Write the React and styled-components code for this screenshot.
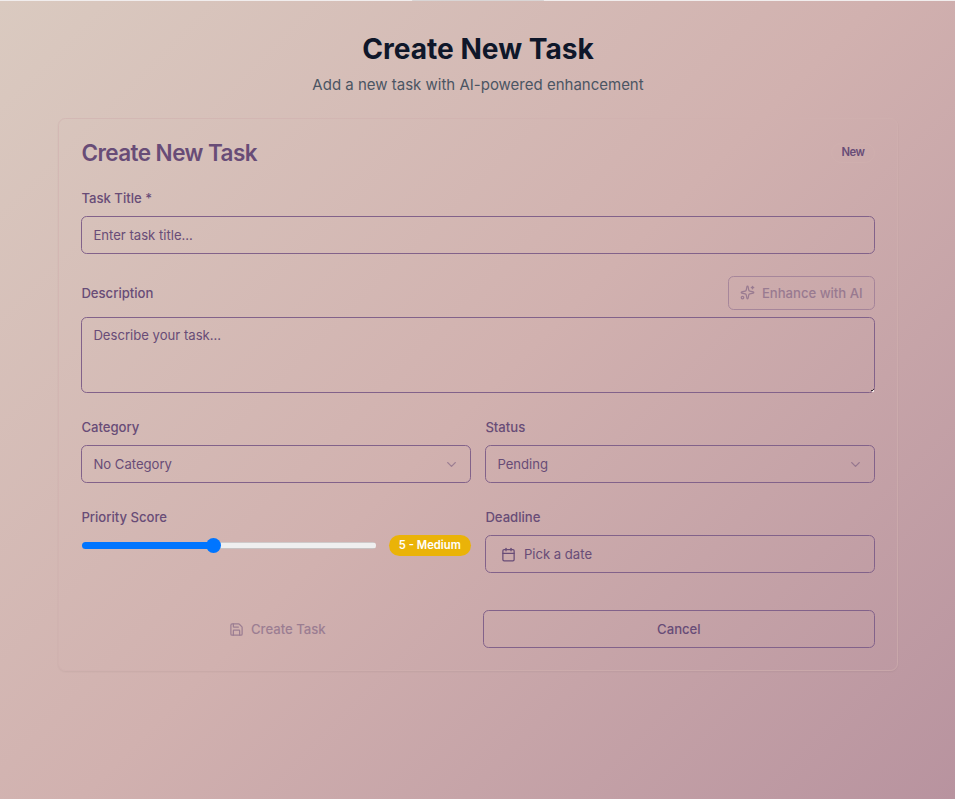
import React, { useState } from "react";
import styled, { createGlobalStyle, css } from "styled-components";
import { Sparkles, ChevronDown, Calendar, Save } from "lucide-react";

const ink = "#684c77";

const GlobalStyle = createGlobalStyle`
  *, *::before, *::after { box-sizing: border-box; }
  html, body { margin: 0; padding: 0; }
  body {
    font-family: Inter, "Liberation Sans", sans-serif;
    font-size: 15px;
    line-height: 22.5px;
    overflow: hidden;
  }
  h1, h2, p { margin: 0; }
  button, input, textarea { font: inherit; color: inherit; }
`;

const Page = styled.main`
  height: 799px;
  padding-top: 32px;
  color: ${ink};
  border-top: 1px solid #f1eded;
  background: linear-gradient(135deg, #dacac0 0%, #d1b1af 50%, #b8939f 100%);
  background-origin: border-box;
`;

const TopShade = styled.div`
  position: absolute;
  top: 0;
  left: 412px;
  width: 132px;
  height: 1px;
  background: #d9d5d5;
  border-radius: 1px;
`;

const PageHeader = styled.header`
  display: flex;
  flex-direction: column;
  gap: 7.5px;
  height: 85px;
  padding-left: 1px;
  text-align: center;
`;

const PageTitle = styled.h1`
  font-size: 28.125px;
  line-height: 33.75px;
  font-weight: 700;
  color: #0f172a;
`;

const Subtitle = styled.p`
  color: #4b5563;
`;

const Card = styled.section`
  width: 840.2px;
  margin: 0 auto 0 57.9px;
  padding: 22.5px;
  border: 1px solid rgba(209, 177, 175, 0.6);
  border-radius: 7.5px;
  box-shadow: 0 1px 2px rgba(0, 0, 0, 0.05);
`;

const CardTitle = styled.h2`
  display: flex;
  align-items: center;
  justify-content: space-between;
  height: 22.5px;
  margin-bottom: 22px;
  font-size: 22.5px;
  line-height: 22.5px;
  font-weight: 600;
  letter-spacing: -0.5625px;
`;

const Badge = styled.span`
  display: inline-flex;
  align-items: center;
  flex: none;
  height: 20.5px;
  padding: 0 9.2px;
  border: 1px solid rgba(209, 177, 175, 0.6);
  border-radius: 99px;
  font-size: 11.25px;
  line-height: 15px;
  font-weight: 600;
  ${(p) =>
    p.$tone === "medium" &&
    css`
      padding: 0 9.8px;
      color: #fff;
      background: #eab308;
      border: 0;
    `}
`;

const Form = styled.form`
  display: flex;
  flex-direction: column;
  gap: 22.5px;
`;

const Columns = styled.div`
  display: grid;
  grid-template-columns: 1fr 1fr;
  gap: ${(p) => p.$gap || "14.8px"};
  padding-top: ${(p) => p.$top || "0"};
`;

const Field = styled.div`
  display: flex;
  flex-direction: column;
  gap: 7.5px;
`;

const Label = styled.label`
  padding-top: 0.6px;
  margin-bottom: -0.6px;
  font-size: 13.125px;
  font-weight: 500;
`;

const LabelRow = styled.div`
  display: flex;
  align-items: center;
  justify-content: space-between;
  ${Label} {
    padding-top: 0;
    margin-bottom: 0;
  }
`;

const control = css`
  width: 100%;
  border: 1px solid #82628a;
  border-radius: 5.6px;
  background: transparent;
  font-size: 13.125px;
  line-height: 18.75px;
  outline: none;
`;

const TextInput = styled.input`
  ${control}
  height: 37.5px;
  padding: 0 11px;
  &::placeholder { color: ${ink}; opacity: 1; }
`;

const TextAreaFrame = styled.div`
  position: relative;
  height: 75.5px;
`;

const TextArea = styled.textarea`
  ${control}
  display: block;
  height: 75.5px;
  padding: 7.5px 11px;
  resize: none;
  &::placeholder { color: ${ink}; opacity: 1; }
`;

const ResizeGrip = styled.svg`
  position: absolute;
  right: 0;
  bottom: 0;
  width: 4px;
  height: 4px;
`;

const SelectButton = styled.button`
  ${control}
  display: flex;
  align-items: center;
  justify-content: space-between;
  height: 37.5px;
  padding: 0 11px;
  svg { opacity: 0.5; }
`;

const Button = styled.button`
  display: inline-flex;
  align-items: center;
  justify-content: ${(p) => (p.$start ? "flex-start" : "center")};
  gap: ${(p) => (p.$small ? "7px" : "7.5px")};
  height: ${(p) => (p.$small ? "33.75px" : "37.5px")};
  padding: ${(p) => (p.$small ? "0 11px 0 11.2px" : "0 15px")};
  border: ${(p) => (p.$plain ? "0" : "1px solid #82628a")};
  border-radius: 5.6px;
  background: transparent;
  font-size: 13.125px;
  line-height: 18.75px;
  font-weight: ${(p) => (p.$start ? 400 : 500)};
  opacity: ${(p) => (p.disabled ? 0.5 : 1)};
`;

const SliderRow = styled.div`
  display: flex;
  align-items: center;
  gap: 12.8px;
  height: 20.5px;
  padding-left: 0.6px;
`;

const Slider = styled.input`
  appearance: none;
  flex: 1;
  min-width: 0;
  height: 7px;
  margin: 0;
  border-radius: 4px;
  background:
    linear-gradient(#0075ff, #0075ff) 0 0 / var(--fill) 100% no-repeat,
    linear-gradient(#cfcaca 1px, #efefef 1px, #efefef 6px, #c8c3c3 6px);

  &::-webkit-slider-thumb {
    appearance: none;
    width: 15px;
    height: 15px;
    border-radius: 50%;
    background: #0075ff;
  }
`;

export default function App() {
  const [priority, setPriority] = useState(5);
  return (
    <>
      <GlobalStyle />
      <TopShade />
      <Page>
        <PageHeader>
          <PageTitle>Create New Task</PageTitle>
          <Subtitle>Add a new task with AI-powered enhancement</Subtitle>
        </PageHeader>
        <Card>
          <CardTitle>
            Create New Task
            <Badge>New</Badge>
          </CardTitle>
          <Form onSubmit={(e) => e.preventDefault()}>
            <Field>
              <Label htmlFor="title">Task Title *</Label>
              <TextInput id="title" placeholder="Enter task title..." />
            </Field>
            <Field>
              <LabelRow>
                <Label htmlFor="description">Description</Label>
                <Button type="button" $small disabled>
                  <Sparkles size={15} />
                  Enhance with AI
                </Button>
              </LabelRow>
              <TextAreaFrame>
                <TextArea id="description" placeholder="Describe your task..." />
                <ResizeGrip viewBox="0 0 4 4" shapeRendering="crispEdges">
                  <path d="M0 1h1v1H0zM2 0h1v1H2zM1 1h1v1H1z" fill="#3b3038" />
                  <path d="M1 2h2v1H1zM2 1h1v1H2z" fill="#efe6e6" />
                </ResizeGrip>
              </TextAreaFrame>
            </Field>
            <Columns>
              <Field>
                <Label>Category</Label>
                <SelectButton type="button">
                  No Category
                  <ChevronDown size={15} />
                </SelectButton>
              </Field>
              <Field>
                <Label>Status</Label>
                <SelectButton type="button">
                  Pending
                  <ChevronDown size={15} />
                </SelectButton>
              </Field>
            </Columns>
            <Columns>
              <Field>
                <Label htmlFor="priority">Priority Score</Label>
                <SliderRow>
                  <Slider
                    id="priority"
                    type="range"
                    min="1"
                    max="10"
                    value={priority}
                    onChange={(e) => setPriority(Number(e.target.value))}
                    style={{ "--fill": `${((priority - 1) / 9) * 100}%` }}
                  />
                  <Badge $tone="medium">5 - Medium</Badge>
                </SliderRow>
              </Field>
              <Field>
                <Label>Deadline</Label>
                <Button type="button" $start>
                  <Calendar size={15} />
                  Pick a date
                </Button>
              </Field>
            </Columns>
            <Columns $gap="10.4px" $top="15px">
              <Button type="submit" $plain disabled>
                <Save size={15} />
                Create Task
              </Button>
              <Button type="button">Cancel</Button>
            </Columns>
          </Form>
        </Card>
      </Page>
    </>
  );
}
